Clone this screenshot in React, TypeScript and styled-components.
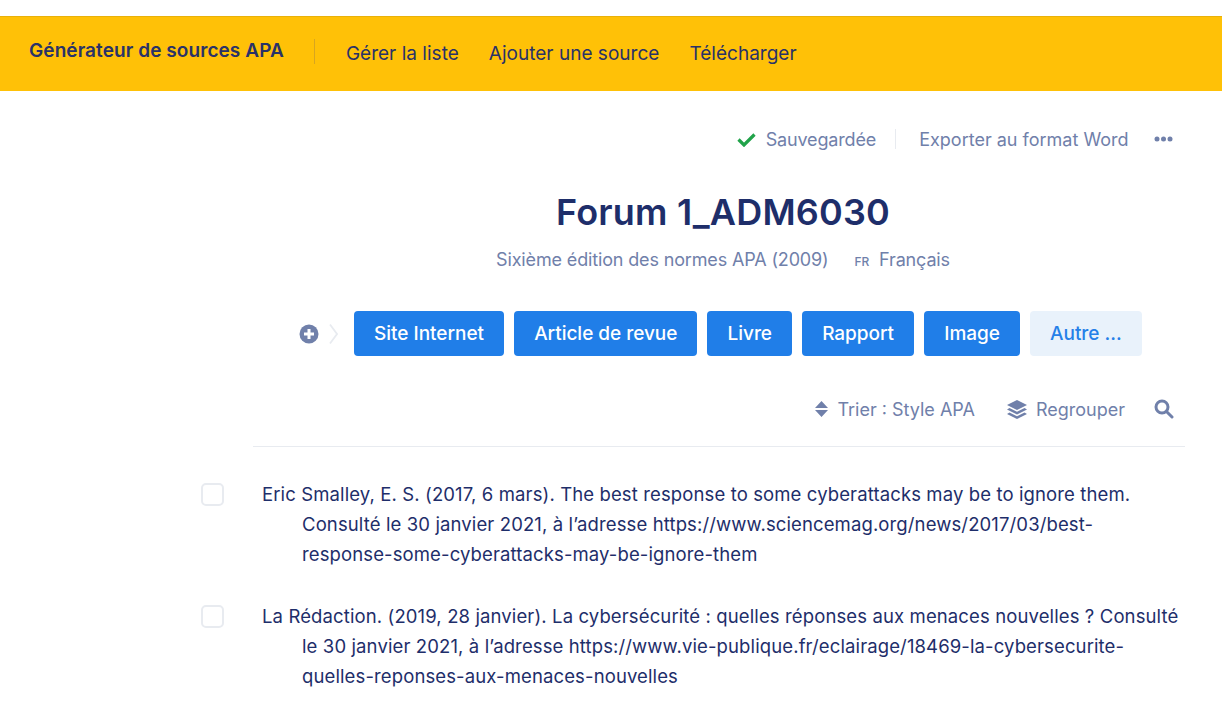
import React from "react";
import styled, { createGlobalStyle } from "styled-components";

const Global = createGlobalStyle`
  html, body { margin: 0; padding: 0; background: #fff; }
  body { font-family: Inter, "Noto Sans", Arial, sans-serif; color: #1e2e6a; }
  #root { width: 1222px; height: 715px; overflow: hidden; }
`;

const Page = styled.div`
  padding-top: 16px;
`;

const TopBar = styled.header`
  height: 75px;
  background: #ffc107;
  box-shadow: inset 0 1px 0 #e9b10a;
  display: flex;
  align-items: center;
  padding-left: 29px;
`;

const Brand = styled.div`
  font-size: 19px;
  font-weight: 600;
  letter-spacing: 0.08px;
  color: #2a3268;
  padding-right: 30px;
  margin-top: -6px;
  white-space: nowrap;
`;

const BrandDivider = styled.span`
  width: 1px;
  height: 25px;
  background: #d7a520;
  margin-top: -4px;
`;

const Nav = styled.nav`
  display: flex;
  gap: 30px;
  padding-left: 31px;
`;

const NavLink = styled.a`
  font-size: 19px;
  letter-spacing: 0.02px;
  color: #2a3268;
  white-space: nowrap;
`;

const Main = styled.main`
  margin-left: 253px;
  width: 932px;
`;

const StatusBar = styled.div`
  display: flex;
  align-items: center;
  justify-content: flex-end;
  height: 30px;
  margin-top: 33px;
  padding-right: 12px;
  color: #7080aa;
  font-size: 18px;
`;

const Saved = styled.span`
  display: flex;
  align-items: center;
  gap: 10px;
  padding-right: 19px;
  border-right: 1px solid #e8ebf0;
  height: 20px;
  letter-spacing: -0.15px;
`;

const ExportLink = styled.a`
  padding: 0 25.5px 0 23px;
`;

const Heading = styled.div`
  padding-left: 8px;
  text-align: center;
`;

const Title = styled.h1`
  margin: 36px 0 0;
  font-size: 36px;
  line-height: 44px;
  font-weight: 600;
  letter-spacing: 0.2px;
  color: #1e2e6a;
`;

const Subtitle = styled.div`
  margin-top: 14px;
  height: 24px;
  line-height: 24px;
  display: flex;
  justify-content: center;
  gap: 26px;
  font-size: 18px;
  letter-spacing: -0.15px;
  color: #7080aa;
`;

const Lang = styled.span`
  display: flex;
  align-items: baseline;
  gap: 10px;
`;

const LangCode = styled.span`
  font-size: 12px;
  font-weight: 500;
`;

const SourceRow = styled.div`
  display: flex;
  align-items: center;
  margin: 39px 0 0 46px;
  gap: 10px;
`;

const AddGroup = styled.div`
  display: flex;
  align-items: center;
  gap: 10px;
  margin-right: 6px;
`;

const SourceButton = styled.button<{ $muted?: boolean }>`
  height: 45px;
  padding: 0 20.1px;
  border: 0;
  border-radius: 4px;
  font: 500 19px Inter, sans-serif;
  letter-spacing: -0.03px;
  white-space: nowrap;
  color: ${(p) => (p.$muted ? "#2580e8" : "#fff")};
  background: ${(p) => (p.$muted ? "#e9f2fb" : "#207ee8")};
`;

const Tools = styled.div`
  display: flex;
  align-items: center;
  justify-content: flex-end;
  height: 36px;
  margin-top: 35px;
  padding: 0 11px 0 0;
  font-size: 18px;
  color: #7080aa;
`;

const Tool = styled.span<{ $after: number }>`
  display: flex;
  align-items: center;
  gap: 9px;
  margin-right: ${(p) => p.$after}px;
`;

const Rule = styled.hr`
  margin: 0;
  margin-top: 19px;
  border: 0;
  border-top: 1px solid #e8ebf0;
`;

const List = styled.ul`
  list-style: none;
  margin: 32px 0 0 -52px;
  padding: 0;
  display: flex;
  flex-direction: column;
  gap: 32px;
`;

const Entry = styled.li`
  display: flex;
  gap: 38px;
`;

const Check = styled.span`
  flex: none;
  width: 19px;
  height: 19px;
  margin-top: 4px;
  border: 2px solid #e8ebf0;
  border-radius: 5px;
`;

const Citation = styled.p`
  margin: 0;
  padding-left: 40px;
  text-indent: -40px;
  font-size: 18.5px;
  line-height: 30px;
  letter-spacing: 0.12px;
  white-space: nowrap;
  color: #1e2e6a;
`;

const CheckIcon = () => (
  <svg width="19" height="15" viewBox="0 0 19 15"><path d="M1.5 7.5 7 13 17.5 2.5" fill="none" stroke="#21a34a" strokeWidth="3.2" /></svg>
);
const Dots = () => (
  <svg width="19" height="6" viewBox="0 0 19 6" fill="#7080aa"><circle cx="3" cy="3" r="2.5" /><circle cx="9.5" cy="3" r="2.5" /><circle cx="16" cy="3" r="2.5" /></svg>
);
const PlusCircle = () => (
  <svg width="20" height="20" viewBox="0 0 20 20"><circle cx="10" cy="10" r="9.5" fill="#7080aa" /><path d="M10 5v10M5 10h10" stroke="#fff" strokeWidth="3" /></svg>
);
const Chevron = () => (
  <svg width="9" height="22" viewBox="0 0 9 22"><path d="M1 1.5 8 11 1 20.5" fill="none" stroke="#e8ebf0" strokeWidth="1.8" /></svg>
);
const SortIcon = () => (
  <svg width="13" height="16" viewBox="0 0 13 16" fill="#7080aa"><path d="M6.5 0 13 7H0zM6.5 16 0 9h13z" /></svg>
);
const LayersIcon = () => (
  <svg width="20" height="19" viewBox="0 0 20 19" fill="#7080aa"><path d="M10 0l10 5-10 5L0 5z" /><path d="M2.5 8 10 11.8 17.5 8l2.5 1.4-10 5-10-5z" /><path d="M2.5 12.5 10 16.2l7.5-3.7 2.5 1.4L10 19 0 13.9z" /></svg>
);
const SearchIcon = () => (
  <svg width="20" height="20" viewBox="0 0 20 20" fill="none" stroke="#7080aa" strokeWidth="3"><circle cx="8" cy="8" r="6" /><path d="M12.5 12.5 18 18" strokeLinecap="round" /></svg>
);

const sources = ["Site Internet", "Article de revue", "Livre", "Rapport", "Image"];

export default function App() {
  return (
    <Page>
      <Global />
      <TopBar>
        <Brand>Générateur de sources APA</Brand>
        <BrandDivider />
        <Nav>
          <NavLink>Gérer la liste</NavLink>
          <NavLink>Ajouter une source</NavLink>
          <NavLink>Télécharger</NavLink>
        </Nav>
      </TopBar>
      <Main>
        <StatusBar>
          <Saved><CheckIcon />Sauvegardée</Saved>
          <ExportLink>Exporter au format Word</ExportLink>
          <Dots />
        </StatusBar>
        <Heading>
          <Title>Forum 1_ADM6030</Title>
          <Subtitle>
            <span>Sixième édition des normes APA (2009)</span>
            <Lang><LangCode>FR</LangCode>Français</Lang>
          </Subtitle>
        </Heading>
        <SourceRow>
          <AddGroup><PlusCircle /><Chevron /></AddGroup>
          {sources.map((s) => <SourceButton key={s}>{s}</SourceButton>)}
          <SourceButton $muted>Autre ...</SourceButton>
        </SourceRow>
        <Tools>
          <Tool $after={32}><SortIcon />Trier : Style APA</Tool>
          <Tool $after={29}><LayersIcon />Regrouper</Tool>
          <SearchIcon />
        </Tools>
        <Rule />
        <List>
          <Entry>
            <Check />
            <Citation>Eric Smalley, E. S. (2017, 6 mars). The best response to some cyberattacks may be to ignore them.<br />Consulté le 30 janvier 2021, à l’adresse https://www.sciencemag.org/news/2017/03/best-<br />response-some-cyberattacks-may-be-ignore-them</Citation>
          </Entry>
          <Entry>
            <Check />
            <Citation>La Rédaction. (2019, 28 janvier). La cybersécurité : quelles réponses aux menaces nouvelles ? Consulté<br />le 30 janvier 2021, à l’adresse https://www.vie-publique.fr/eclairage/18469-la-cybersecurite-<br />quelles-reponses-aux-menaces-nouvelles</Citation>
          </Entry>
        </List>
      </Main>
    </Page>
  );
}
